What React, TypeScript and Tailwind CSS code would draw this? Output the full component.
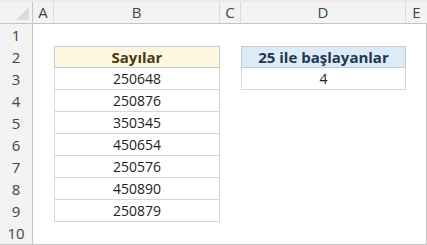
const columns = ["A", "B", "C", "D", "E"];
const numbers = ["250648", "250876", "350345", "450654", "250576", "450890", "250879"];

const font = { fontFamily: '"Open Sans", "Noto Sans", sans-serif' };

function ColHead({ label, last }: { label: string; last?: boolean }) {
  return (
    <div
      className={`flex items-center justify-center bg-[#f3f3f3] border-b border-[#c4c4c4] text-[15px] text-[#444] ${
        last ? "" : "border-r border-r-[#dadada]"
      }`}
    >
      {label}
    </div>
  );
}

function RowHead({ n }: { n: number }) {
  return (
    <div className="flex items-center justify-center bg-[#f3f3f3] border-r border-[#c4c4c4] text-[15px] text-[#444]">
      {n}
    </div>
  );
}

export default function App() {
  const rows = Array.from({ length: 10 }, (_, i) => i + 1);

  return (
    <div className="w-[427px] h-[245px] bg-white overflow-hidden" style={font}>
      <div className="h-[2px] bg-[#efe9ec]" />
      <div className="grid grid-cols-[33px_21px_166px_21px_165px_21px] grid-rows-[22px_repeat(10,22px)] border-r border-b border-[#c4c4c4] w-[427px]">
        {/* corner */}
        <div className="relative bg-[#f3f3f3] border-b border-r border-[#c4c4c4]">
          <svg className="absolute right-[3px] bottom-[3px]" width="13" height="13" viewBox="0 0 13 13">
            <polygon points="13,0 13,13 0,13" fill="#dcdcdc" />
          </svg>
        </div>
        {columns.map((c, i) => (
          <ColHead key={c} label={c} last={i === columns.length - 1} />
        ))}

        {rows.map((r) => {
          const n = r >= 3 && r <= 9 ? numbers[r - 3] : null;
          return [
            <RowHead key={`h${r}`} n={r} />,
            <div key={`a${r}`} />,
            r === 2 ? (
              <div
                key={`b${r}`}
                className="flex items-center justify-center bg-[#fdf6e1] border border-[#c9c9c9] text-[15px] font-bold text-[#4a3a10]"
              >
                Sayılar
              </div>
            ) : n ? (
              <div
                key={`b${r}`}
                className="flex items-center justify-center border-x border-b border-[#d6d6d6] text-[14px] text-[#222]"
              >
                {n}
              </div>
            ) : (
              <div key={`b${r}`} />
            ),
            <div key={`c${r}`} />,
            r === 2 ? (
              <div
                key={`d${r}`}
                className="flex items-center justify-center bg-[#ddebf7] border border-[#c9c9c9] text-[15px] font-bold text-[#1e3852]"
              >
                25 ile başlayanlar
              </div>
            ) : r === 3 ? (
              <div
                key={`d${r}`}
                className="flex items-center justify-center border-x border-b border-[#d6d6d6] text-[14px] text-[#222]"
              >
                4
              </div>
            ) : (
              <div key={`d${r}`} />
            ),
            <div key={`e${r}`} />,
          ];
        })}
      </div>
    </div>
  );
}
